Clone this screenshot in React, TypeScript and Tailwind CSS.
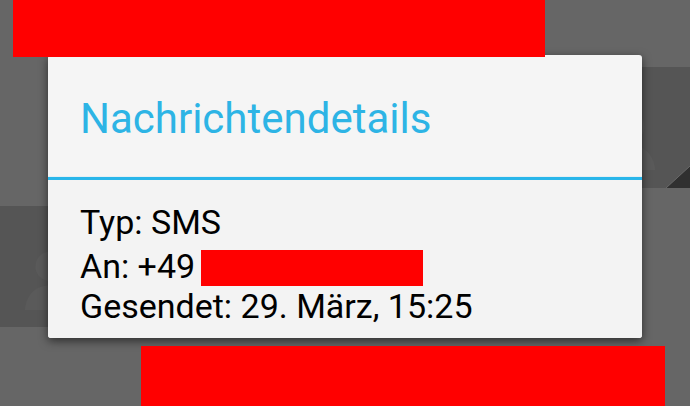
import React from "react";

function Silhouette({ className }: { className: string }) {
  return (
    <svg className={className} viewBox="0 0 100 120" fill="none">
      <circle cx="50" cy="42" r="26" fill="#5a5a5a" />
      <path d="M5 120 C8 88 28 76 50 76 C72 76 92 88 95 120 Z" fill="#5a5a5a" />
    </svg>
  );
}

export default function App() {
  return (
    <div
      className="relative w-[690px] h-[406px] overflow-hidden bg-[#666666]"
      style={{ fontFamily: "Roboto, 'Noto Sans', sans-serif" }}
    >
      {/* background conversation */}
      <div className="flex flex-col pt-[67px]">
        <div className="relative ml-auto w-[300px] h-[121px] bg-[#555555]">
          <Silhouette className="absolute left-[212px] top-[18px] w-[56px] h-[103px]" />
          <svg className="absolute right-0 bottom-0 w-[24px] h-[22px]" viewBox="0 0 24 22">
            <polygon points="0,22 24,0 24,22" fill="#303030" />
            <line x1="0" y1="22" x2="24" y2="0" stroke="#6a6a6a" strokeWidth="1" />
          </svg>
        </div>
        <div className="h-[18px]" />
        <div className="relative w-[300px] h-[121px] bg-[#555555]">
          <Silhouette className="absolute left-[22px] top-[20px] w-[56px] h-[101px]" />
        </div>
      </div>

      {/* dialog */}
      <div className="absolute left-[48px] top-[55px] w-[594px] h-[283px] rounded-[3px] bg-[#f5f5f5] shadow-[0_3px_10px_rgba(0,0,0,0.55)] flex flex-col overflow-hidden">
        <div className="h-[122px] pl-[32px] pt-[43px]">
          <div className="text-[42px] leading-none text-[#2db4e5]">Nachrichtendetails</div>
        </div>
        <div className="h-[3px] bg-[#29b6ea] shadow-[0_0_1px_rgba(51,181,229,0.7)]" />
        <div className="flex-1 bg-[#f3f3f3] pl-[32px] pt-[22px] text-[34px] leading-[40px] text-black">
          <div>Typ: SMS</div>
          <div className="flex items-baseline">
            <span>An: +49</span>
            <span className="inline-block ml-[6px] w-[222px] h-[36px] translate-y-[8px] bg-[#ff0000]" />
          </div>
          <div>Gesendet: 29. März, 15:25</div>
        </div>
      </div>

      {/* redaction bars */}
      <div className="absolute left-[13px] top-0 w-[532px] h-[57px] bg-[#ff0000]" />
      <div className="absolute left-[141px] top-[346px] w-[524px] h-[60px] bg-[#ff0000]" />
    </div>
  );
}
